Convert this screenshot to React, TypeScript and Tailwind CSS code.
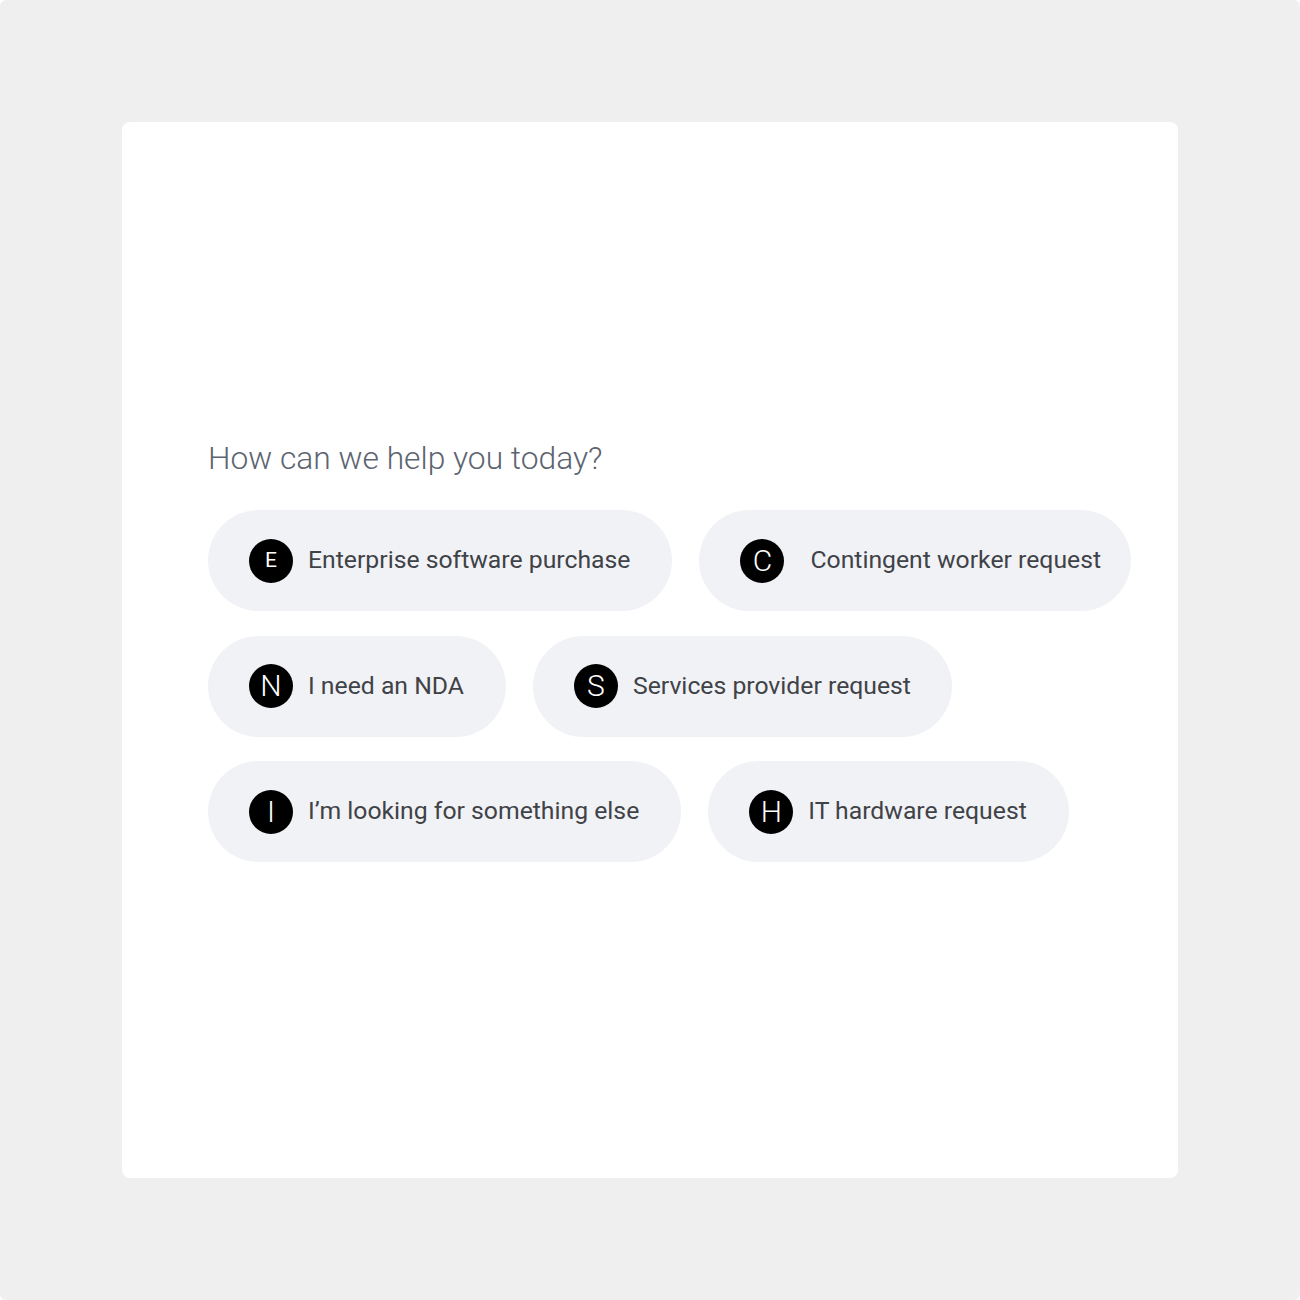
const options = [
  [
    { letter: "E", label: "Enterprise software purchase", gap: "gap-[15px]", pr: "pr-[42px]", first: true },
    { letter: "C", label: "Contingent worker request", gap: "gap-[26px]", pr: "pr-[30px]" },
  ],
  [
    { letter: "N", label: "I need an NDA", gap: "gap-[15px]", pr: "pr-[42px]" },
    { letter: "S", label: "Services provider request", gap: "gap-[15px]", pr: "pr-[41px]" },
  ],
  [
    { letter: "I", label: "I’m looking for something else", gap: "gap-[15px]", pr: "pr-[42px]" },
    { letter: "H", label: "IT hardware request", gap: "gap-[15px]", pr: "pr-[42px]" },
  ],
];

export default function App() {
  return (
    <div className="w-[1300px] h-[1300px] bg-white">
      <div
        className="w-full h-full rounded-[6px] bg-[#efefef] flex items-center justify-center"
        style={{ fontFamily: "Roboto, 'Noto Sans', sans-serif" }}
      >
        <div className="w-[1056px] h-[1056px] bg-white rounded-[8px] flex flex-col justify-center pl-[86px] pt-[3px]">
          <h1 className="text-[31.75px] leading-[36px] font-light text-[#5c6470] mb-[33px]">
            How can we help you today?
          </h1>
          <div className="flex flex-col gap-[24.5px]">
            {options.map((row, i) => (
              <div key={i} className="flex gap-[27px]">
                {row.map((o) => (
                  <button
                    key={o.letter}
                    className={`h-[101px] rounded-full bg-[#f1f2f6] flex items-center pl-[41px] ${o.pr} ${o.gap}`}
                  >
                    <span
                      className={
                        o.first
                          ? "w-[44px] h-[44px] rounded-full bg-black text-white flex items-center justify-center text-[21px] font-normal leading-none"
                          : "w-[44px] h-[44px] rounded-full bg-black text-white flex items-center justify-center text-[30px] font-light leading-none"
                      }
                    >
                      {o.letter}
                    </span>
                    <span className="text-[24.75px] text-[#3f4247] leading-none whitespace-nowrap">
                      {o.label}
                    </span>
                  </button>
                ))}
              </div>
            ))}
          </div>
        </div>
      </div>
    </div>
  );
}
